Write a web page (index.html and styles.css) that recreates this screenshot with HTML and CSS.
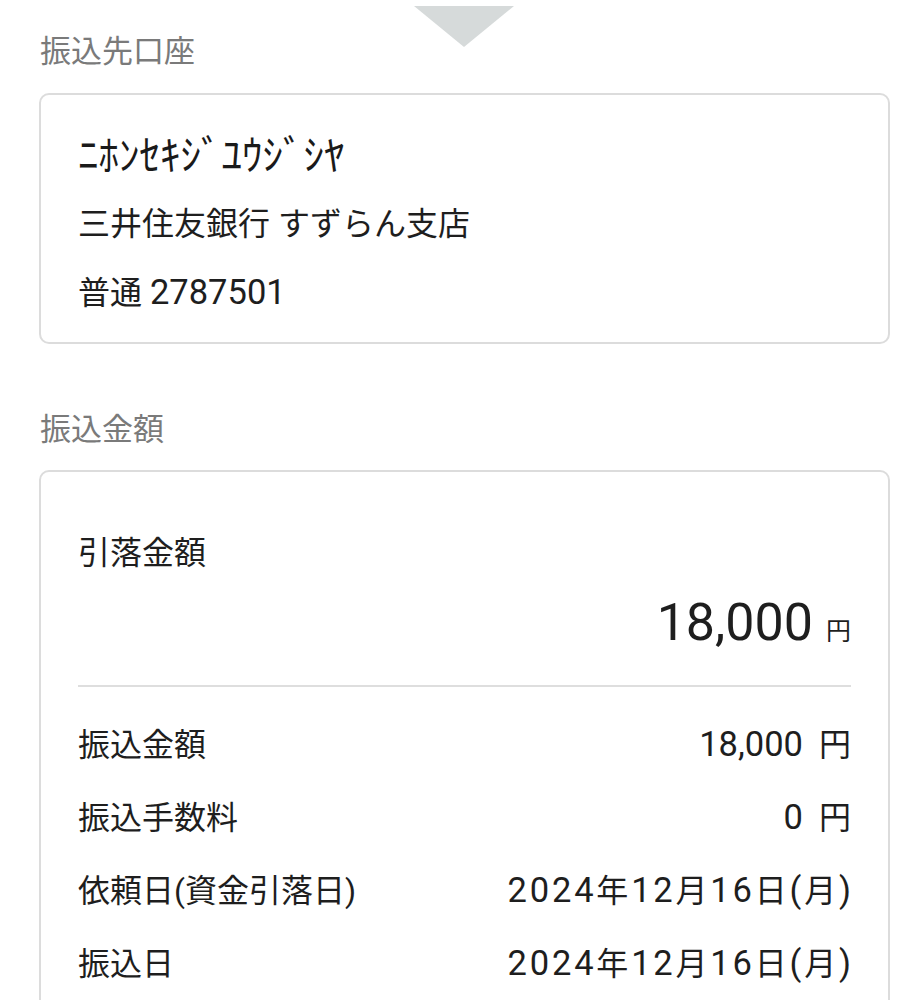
FILE: index.html
```html
<!DOCTYPE html>
<html lang="ja">
<head>
<meta charset="utf-8">
<link rel="stylesheet" href="styles.css">
</head>
<body>
<div class="page">
  <div class="arrow"></div>
  <h2 class="section-title">振込先口座</h2>
  <div class="card account">
    <div class="line kana">ﾆﾎﾝｾｷｼﾞﾕｳｼﾞｼﾔ</div>
    <div class="line">三井住友銀行 すずらん支店</div>
    <div class="line">普通 <span class="num">2787501</span></div>
  </div>

  <h2 class="section-title second">振込金額</h2>
  <div class="card amount">
    <div class="line">引落金額</div>
    <div class="total"><span class="total-num">18,000</span><span class="total-unit">円</span></div>
    <div class="divider"></div>
    <div class="row"><span>振込金額</span><span class="value"><span class="num">18,000</span><span class="unit">円</span></span></div>
    <div class="row"><span>振込手数料</span><span class="value"><span class="num">0</span><span class="unit">円</span></span></div>
    <div class="row"><span>依頼日(資金引落日)</span><span class="value date"><span class="num">2024</span>年<span class="num">12</span>月<span class="num">16</span>日<span class="num">(</span>月<span class="num">)</span></span></div>
    <div class="row"><span>振込日</span><span class="value date"><span class="num">2024</span>年<span class="num">12</span>月<span class="num">16</span>日<span class="num">(</span>月<span class="num">)</span></span></div>
  </div>
</div>
</body>
</html>
```

FILE: styles.css
```css
html, body {
  margin: 0;
  padding: 0;
  background: #ffffff;
}
body {
  font-family: "Roboto", "Noto Sans CJK JP", sans-serif;
  color: #1e1e1e;
}
.page {
  position: relative;
  padding: 0 28px 0 39px;
}
.arrow {
  position: absolute;
  top: 6px;
  left: calc(39px + 425px - 50px);
  width: 0;
  height: 0;
  border-left: 50px solid transparent;
  border-right: 50px solid transparent;
  border-top: 41px solid #d6dada;
}
.section-title {
  margin: 0;
  padding-top: 32px;
  font-size: 31px;
  line-height: 40px;
  font-weight: 400;
  color: #7a7a7a;
  padding-left: 1px;
}
.section-title.second {
  padding-top: 66px;
}
.card {
  margin-top: 21px;
  border: 2px solid #dcdcdc;
  border-radius: 10px;
  padding: 0 37px;
}
.second + .card {
  margin-top: 20px;
}
.account {
  padding-top: 27px;
  padding-bottom: 15px;
}
.line {
  font-size: 32px;
  line-height: 68px;
}
.line.kana {
  font-size: 41px;
  color: #1a1a1a;
}
.num {
  font-family: "Roboto", sans-serif;
  font-size: 34.5px;
}
.amount {
  padding-top: 47px;
  padding-bottom: 10px;
}
.total {
  margin-top: 4px;
  display: flex;
  justify-content: flex-end;
  align-items: baseline;
  line-height: 64px;
}
.total-num {
  font-size: 52px;
}
.total-unit {
  font-size: 25px;
  margin-left: 13px;
}
.divider {
  margin-top: 21px;
  height: 2px;
  background: #dedede;
}
.divider + .row {
  margin-top: 21px;
}
.row {
  display: flex;
  justify-content: space-between;
  align-items: baseline;
  font-size: 32px;
  line-height: 72px;
}
.unit {
  margin-left: 16px;
}
.value.date {
  letter-spacing: 2.8px;
  margin-right: -2.8px;
}
```
